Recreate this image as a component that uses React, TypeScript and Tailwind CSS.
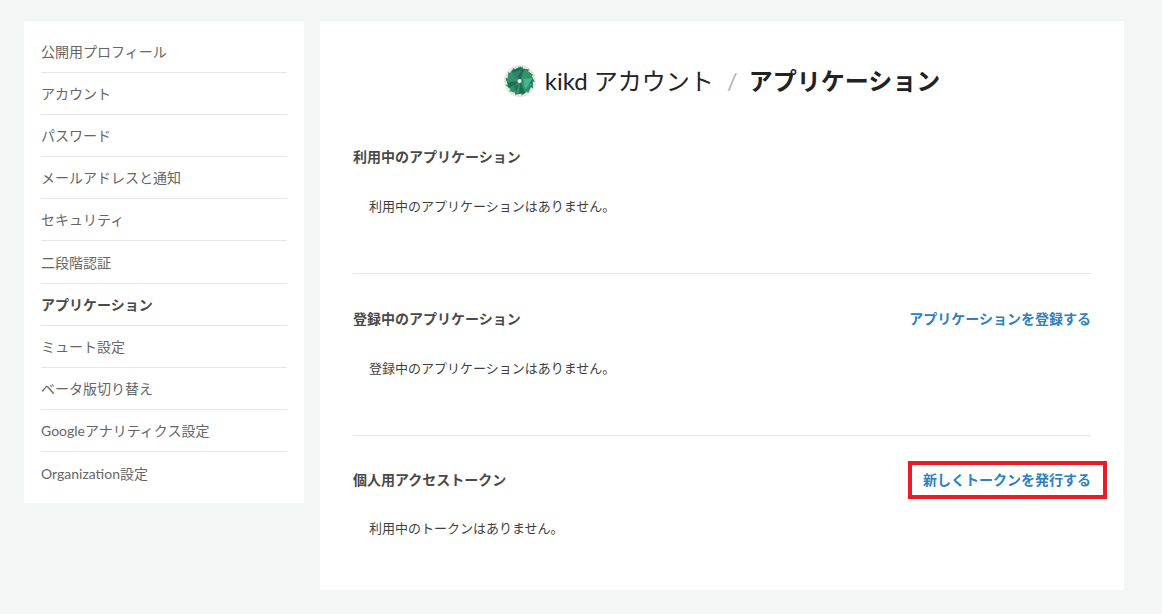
const NAV_ITEMS = [
  { label: '公開用プロフィール' },
  { label: 'アカウント' },
  { label: 'パスワード' },
  { label: 'メールアドレスと通知' },
  { label: 'セキュリティ' },
  { label: '二段階認証' },
  { label: 'アプリケーション', active: true },
  { label: 'ミュート設定' },
  { label: 'ベータ版切り替え' },
  { label: 'Googleアナリティクス設定' },
  { label: 'Organization設定' },
];

const BLADES = [0, 27, 54, 81, 108, 135, 162, 189, 216, 243, 270, 297, 324, 351];

function Logo() {
  return (
    <svg width="32" height="32" viewBox="0 0 32 32" className="shrink-0">
      <circle cx="16" cy="16" r="16" fill="#e2e6e4" />
      {BLADES.map((deg, i) => (
        <polygon
          key={deg}
          points="16,16 19,1.5 9,5"
          fill={i % 3 === 0 ? '#2f9460' : i % 3 === 1 ? '#17724f' : '#3a8f6c'}
          transform={`rotate(${deg} 16 16)`}
        />
      ))}
      <polygon points="19,14 29,13 21,25" fill="#45b596" />
      <polygon points="8,8 17,5 13,14" fill="#3d7a80" />
      <polygon points="9,19 15,20 12,27" fill="#2a6f70" />
      <circle cx="15.5" cy="16" r="2" fill="#f0f4f2" />
    </svg>
  );
}

function Section({
  title,
  body,
  action,
  boxed,
  className,
  bodyClass,
}: {
  title: string;
  body: string;
  action?: string;
  boxed?: boolean;
  className: string;
  bodyClass: string;
}) {
  return (
    <section className={className}>
      <div className="flex items-center justify-between h-[24px]">
        <h2 className="text-[14px] font-bold text-[#4a4a4a] leading-[24px]">{title}</h2>
        {action && (
          <a className="relative text-[14px] font-bold text-[#2d80c2] leading-[24px]">
            {action}
            {boxed && (
              <span className="absolute -left-[15px] -right-[16px] -top-[7px] -bottom-[7px] border-4 border-[#ed1c24]" />
            )}
          </a>
        )}
      </div>
      <p className={`pl-4 text-[13px] text-[#3f3f3f] leading-[24px] ${bodyClass}`}>{body}</p>
    </section>
  );
}

export default function App() {
  return (
    <div
      className="min-h-[614px] bg-[#f4f6f6] flex items-start gap-4 pl-6 pt-[21px]"
      style={{ fontFamily: 'Lato, "Noto Sans CJK JP", "Noto Sans", sans-serif' }}
    >
      <nav className="w-[280px] bg-white px-[17px] pt-[10px] pb-[8px]">
        <ul>
          {NAV_ITEMS.map((item, i) => {
            const isLast = i === NAV_ITEMS.length - 1;
            return (
              <li
                key={item.label}
                className={`flex items-center text-[14px] ${
                  isLast ? 'h-[43px] pt-[1px]' : 'h-[42.1px] border-b border-[#e6e8e8]'
                } ${item.active ? 'font-bold text-[#4a4a4a]' : 'text-[#666666]'}`}
              >
                {item.label}
              </li>
            );
          })}
        </ul>
      </nav>

      <main className="w-[804px] h-[569px] bg-white px-[33px]">
        <h1 className="flex items-center justify-center gap-[8px] pt-[29px] h-[90px] text-[24px] leading-[34px] text-[#222222]">
          <Logo />
          <span className="ml-[1px] pr-[2px]">kikd アカウント</span>
          <span className="text-[#b4b4b4] ml-[3px] mr-[3px]">/</span>
          <span className="font-bold">アプリケーション</span>
        </h1>
        <Section
          title="利用中のアプリケーション"
          body="利用中のアプリケーションはありません。"
          className="pt-[34px] pb-[55px] border-b border-[#e6e8e8]"
          bodyClass="mt-[25px]"
        />
        <Section
          title="登録中のアプリケーション"
          body="登録中のアプリケーションはありません。"
          action="アプリケーションを登録する"
          className="pt-[33px] pb-[55px] border-b border-[#e6e8e8]"
          bodyClass="mt-[25px]"
        />
        <Section
          title="個人用アクセストークン"
          body="利用中のトークンはありません。"
          action="新しくトークンを発行する"
          boxed
          className="pt-[32px]"
          bodyClass="mt-[24px]"
        />
      </main>
    </div>
  );
}
